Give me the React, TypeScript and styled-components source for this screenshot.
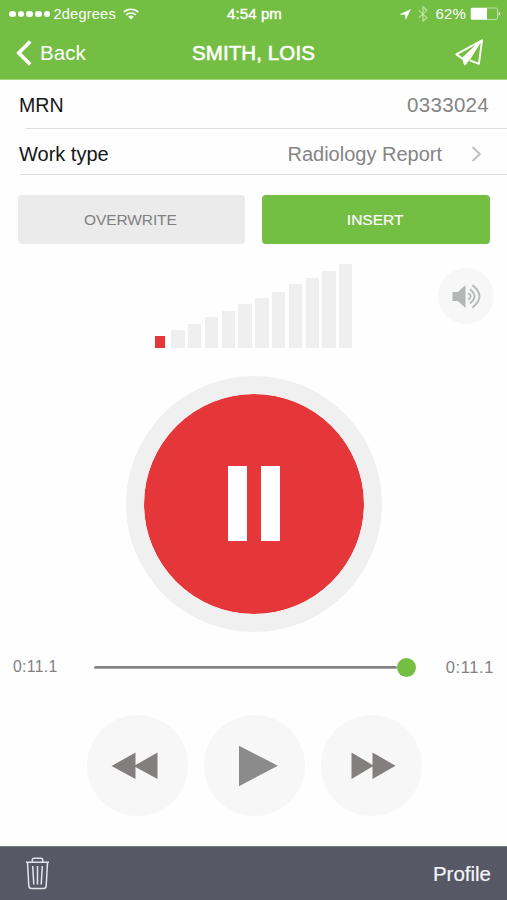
import React from "react";
import styled, { createGlobalStyle } from "styled-components";

const GREEN = "#74be43";
const RED = "#e53739";

const GlobalStyle = createGlobalStyle`
  * { box-sizing: border-box; }
  body { margin: 0; background: #fefefe; }
  button { border: 0; padding: 0; margin: 0; background: none; font: inherit; color: inherit; }
  svg { display: block; flex: none; }
`;

const Screen = styled.main`
  width: 507px;
  height: 900px;
  display: flex;
  flex-direction: column;
  overflow: hidden;
  background: #fefefe;
  font-family: "Liberation Sans", Arial, sans-serif;
  color: #151515;
`;

const Header = styled.header`
  height: 80px;
  flex: none;
  background: ${GREEN};
  border-bottom: 1px solid #a3d583;
  color: #fff;
`;

const Label = styled.span<{ $size: number; $track?: number; $weight?: number }>`
  font-size: ${(p) => p.$size}px;
  line-height: 24px;
  letter-spacing: ${(p) => p.$track ?? 0}px;
  -webkit-text-stroke: ${(p) => p.$weight ?? 0}px currentColor;
  white-space: nowrap;
`;

const Spacer = styled.span<{ $width: number }>`
  width: ${(p) => p.$width}px;
  flex: none;
`;

const StatusBar = styled.div`
  height: 27px;
  display: grid;
  grid-template-columns: 1fr auto 1fr;
  align-items: center;
  padding: 1px 6px 0 8px;
`;

const StatusGroup = styled.div<{ $end?: boolean }>`
  display: flex;
  align-items: center;
  justify-content: ${(p) => (p.$end ? "flex-end" : "flex-start")};
`;

const SignalDots = styled.div`
  display: flex;
  gap: 2px;
  margin: 0 3px 0 1px;
`;

const Dot = styled.i`
  width: 6.7px;
  height: 6.7px;
  border-radius: 50%;
  background: #fff;
`;

const NavBar = styled.div`
  height: 51px;
  display: grid;
  grid-template-columns: 1fr auto 1fr;
  align-items: center;
  padding: 0 23px 0 16px;
`;

const Title = styled.h1`
  margin: 0 0 0 7px;
  font-weight: 400;
  line-height: 24px;
  display: flex;
`;

const BackButton = styled.button`
  display: flex;
  align-items: center;
  gap: 7px;
`;

const SendButton = styled.button`
  justify-self: end;
`;

const DetailRow = styled.div<{ $height: number; $indent: number; $drop: number }>`
  height: ${(p) => p.$height}px;
  flex: none;
  display: flex;
  align-items: center;
  justify-content: space-between;
  padding: ${(p) => p.$drop}px 18px 0 19px;
  background: linear-gradient(#dedede, #dedede) ${(p) => p.$indent}px 100% / 100% 1px no-repeat;
`;

const DetailValue = styled.div`
  display: flex;
  align-items: center;
  color: #858585;
`;

const Chevron = styled.div`
  margin: 0 7px 0 29px;
`;

const ModeSwitch = styled.div`
  display: grid;
  grid-template-columns: 1fr 1fr;
  gap: 17px;
  padding: 20px 17px 0 17.5px;
`;

const ModeButton = styled.button<{ $active?: boolean }>`
  height: 49px;
  border-radius: 4px;
  padding-right: 2px;
  background: ${(p) => (p.$active ? GREEN : "#ebebeb")};
  color: ${(p) => (p.$active ? "#fff" : "#808182")};
`;

const LevelArea = styled.section`
  height: 104px;
  display: grid;
  grid-template-columns: 1fr auto 1fr;
  padding: 20px 13px 0 13px;
`;

const Meter = styled.div`
  grid-column: 2;
  height: 84px;
  display: flex;
  align-items: flex-end;
  gap: 3.4px;
`;

const MeterBar = styled.i<{ $height: number; $lit?: boolean }>`
  width: ${(p) => (p.$lit ? 10 : 13.4)}px;
  margin-right: ${(p) => (p.$lit ? 3.4 : 0)}px;
  height: ${(p) => p.$height}px;
  background: ${(p) => (p.$lit ? RED : "#efefef")};
`;

const RoundButton = styled.button<{ $size: number }>`
  width: ${(p) => p.$size}px;
  height: ${(p) => p.$size}px;
  border-radius: 50%;
  background: #f7f7f7;
  display: flex;
  align-items: center;
  justify-content: center;
`;

const SpeakerButton = styled(RoundButton)`
  justify-self: end;
  margin-top: 4px;
`;

const RecordButton = styled.button`
  width: 256px;
  height: 256px;
  margin: 28px auto 0;
  flex: none;
  border: 18px solid #f0f0f0;
  border-radius: 50%;
  background: ${RED};
  background-clip: padding-box;
  display: flex;
  align-items: center;
  justify-content: center;
  gap: 14px;
`;

const PauseBar = styled.i`
  width: 19px;
  height: 75px;
  margin-bottom: 1px;
  background: #fff;
`;

const Timeline = styled.div`
  height: 24px;
  flex: none;
  margin-top: 23px;
  padding: 0 13px;
  display: flex;
  align-items: center;
  color: #828282;
`;

const Track = styled.div`
  width: 322px;
  margin: 0 29.5px 0 auto;
  display: flex;
  align-items: center;
`;

const TrackLine = styled.div`
  flex: 1;
  height: 3px;
  border-radius: 2px;
  background: #838383;
  border-bottom: 1px solid #a5a5a5;
`;

const Knob = styled.div`
  width: 19px;
  height: 19px;
  border-radius: 50%;
  background: ${GREEN};
`;

const Transport = styled.div`
  display: flex;
  justify-content: center;
  gap: 16px;
  margin-top: 36px;
  padding-left: 1px;
`;

const Footer = styled.footer`
  height: 54px;
  flex: none;
  margin-top: auto;
  padding: 0 16px 0 25px;
  display: flex;
  align-items: center;
  justify-content: space-between;
  background: #565965;
  border-top: 1px solid #737b80;
  color: #f5f5fa;
`;

const WifiIcon = () => (
  <svg width="16" height="12" viewBox="0 0 16 12" fill="none" stroke="#fff" strokeWidth="1.7">
    <path d="M.8 4.2a10.3 10.3 0 0 1 14.4 0M3.2 6.9a7 7 0 0 1 9.6 0" />
    <path d="M8 11.5 5.2 8.8a4.2 4.2 0 0 1 5.6 0z" fill="#fff" stroke="none" />
  </svg>
);

const LocationIcon = () => (
  <svg width="11" height="11" viewBox="0 0 11 11" fill="#fff" stroke="#fff" strokeWidth=".5">
    <path d="M10.5.5 5.8 10.2 5.4 5.6.4 5.3z" />
  </svg>
);

const BluetoothIcon = () => (
  <svg width="10" height="16" viewBox="0 0 10 16" fill="none" stroke="#c3e6a9" strokeWidth="1.1">
    <path d="m.8 4.4 8.1 7.3L5 15.2V.8l3.9 3.5L.8 11.6" />
  </svg>
);

const BatteryIcon = () => (
  <svg width="31" height="14" viewBox="0 0 31 14">
    <rect x="1" y="1" width="26.5" height="11.5" rx="1.5" fill="none" stroke="#bce29f" />
    <path d="M1 1h16v11.5H1z" fill="#fff" />
    <path d="M28.8 4.8q3 2 0 4z" fill="#fff" />
  </svg>
);

const PlaneIcon = () => (
  <svg width="29" height="28" viewBox="0 0 29 28" fill="none" stroke="#fff" strokeWidth="1.9" strokeLinejoin="round">
    <path d="M27 1.3 1.3 15.4l6.2 4.2L27 1.3l-3.1 23.5-9.1-3.4" />
    <path d="M26.4 2 14.5 20.6l-4.9 5.6-1.8-6.5z" fill="#fff" stroke="#fff" strokeWidth="1" />
  </svg>
);

const SpeakerIcon = () => (
  <svg width="30" height="26" viewBox="0 0 30 26" fill="none" stroke="#b9bbbb" strokeWidth="2">
    <path d="M.5 9h5.3L13.5 2v23l-7.7-7H.5z" fill="#b4b6b6" stroke="none" />
    <path d="M16.2 10q5 3.2 0 6.6M18 6.2q9 7.2 0 14.2M20.4 2.1q14.2 11.2 0 22.5" />
  </svg>
);

const TrashIcon = () => (
  <svg width="25" height="33" viewBox="0 0 25 33" fill="none" stroke="#e2e3ea" strokeWidth="1.5">
    <path d="M1 5.3h23M7.3 5V3q0-1.8 1.8-1.8h6.8q1.8 0 1.8 1.8v2M2.5 5.5l1.3 23.2q.1 2.8 2.8 2.8h11.8q2.7 0 2.8-2.8l1.3-23.2" />
    <path d="m7.7 9 1.1 18.5M12.5 9v18.5M17.3 9l-1.1 18.5" />
  </svg>
);

const SkipIcon = ({ forward = false }: { forward?: boolean }) => (
  <svg width="47" height="28" viewBox="0 0 47 28" fill="#827f7e">
    <path d={forward ? "M1.5 .5 22.5 12.9V.5L45.5 13.7 22.5 27V14.5L1.5 27z" : "M46.5 .5 24.5 13.1V.5L.5 14 24.5 27V14.9L46.5 27z"} />
  </svg>
);

const PlayIcon = () => (
  <svg width="41" height="42" viewBox="0 0 41 42">
    <path d="M1 .8v40.5L39.9 20.7z" fill="#8c8b8b" />
  </svg>
);

const LEVELS = [12, 18, 24, 31, 37.5, 44, 50, 56.5, 64, 70, 77, 84];

export default function App() {
  return (
    <>
      <GlobalStyle />
      <Screen>
        <Header>
          <StatusBar>
            <StatusGroup>
              <SignalDots>
                {[0, 1, 2, 3, 4].map((dot) => <Dot key={dot} />)}
              </SignalDots>
              <Label $size={14.5} $track={0.25}>2degrees</Label>
              <Spacer $width={7} />
              <WifiIcon />
            </StatusGroup>
            <Label $size={15} $track={0.1} $weight={0.4}>4:54 pm</Label>
            <StatusGroup $end>
              <LocationIcon />
              <Spacer $width={7} />
              <BluetoothIcon />
              <Spacer $width={7} />
              <Label $size={15} $track={0.2}>62%</Label>
              <Spacer $width={4} />
              <BatteryIcon />
            </StatusGroup>
          </StatusBar>
          <NavBar>
            <BackButton>
              <svg width="17" height="26" viewBox="0 0 17 26" fill="none" stroke="#fff" strokeWidth="3.7">
                <path d="M14.2 1.5 2.8 13l11.4 11.5" />
              </svg>
              <Label $size={20.5} $track={0.1}>Back</Label>
            </BackButton>
            <Title><Label $size={20.5} $track={0.1} $weight={0.6}>SMITH, LOIS</Label></Title>
            <SendButton aria-label="Send"><PlaneIcon /></SendButton>
          </NavBar>
        </Header>

        <DetailRow $height={49} $indent={26} $drop={1}>
          <Label $size={19.6}>MRN</Label>
          <DetailValue><Label $size={20.5} $track={0.3}>0333024</Label></DetailValue>
        </DetailRow>
        <DetailRow $height={46} $indent={20} $drop={3}>
          <Label $size={20}>Work type</Label>
          <DetailValue>
            <Label $size={20}>Radiology Report</Label>
            <Chevron>
              <svg width="11" height="16" viewBox="0 0 11 16" fill="none" stroke="#c2c2c5" strokeWidth="2">
                <path d="m1.5 1 7.3 7-7.3 7" />
              </svg>
            </Chevron>
          </DetailValue>
        </DetailRow>

        <ModeSwitch>
          <ModeButton><Label $size={15.5} $track={-0.1}>OVERWRITE</Label></ModeButton>
          <ModeButton $active><Label $size={15.5} $weight={0.2}>INSERT</Label></ModeButton>
        </ModeSwitch>

        <LevelArea>
          <Meter>
            {LEVELS.map((height, index) => (
              <MeterBar key={height} $height={height} $lit={index === 0} />
            ))}
          </Meter>
          <SpeakerButton $size={56} aria-label="Speaker"><Spacer $width={1} /><SpeakerIcon /></SpeakerButton>
        </LevelArea>

        <RecordButton aria-label="Pause"><PauseBar /><PauseBar /></RecordButton>

        <Timeline>
          <Label $size={15.8} $track={0.3}>0:11.1</Label>
          <Track><TrackLine /><Knob /></Track>
          <Label $size={16.5} $track={0.6}>0:11.1</Label>
        </Timeline>

        <Transport>
          <RoundButton $size={101} aria-label="Rewind"><SkipIcon /><Spacer $width={5} /></RoundButton>
          <RoundButton $size={101} aria-label="Play"><Spacer $width={8} /><PlayIcon /></RoundButton>
          <RoundButton $size={101} aria-label="Fast forward"><Spacer $width={4} /><SkipIcon forward /></RoundButton>
        </Transport>

        <Footer>
          <TrashIcon />
          <Label $size={20.5} $weight={0.2}>Profile</Label>
        </Footer>
      </Screen>
    </>
  );
}
